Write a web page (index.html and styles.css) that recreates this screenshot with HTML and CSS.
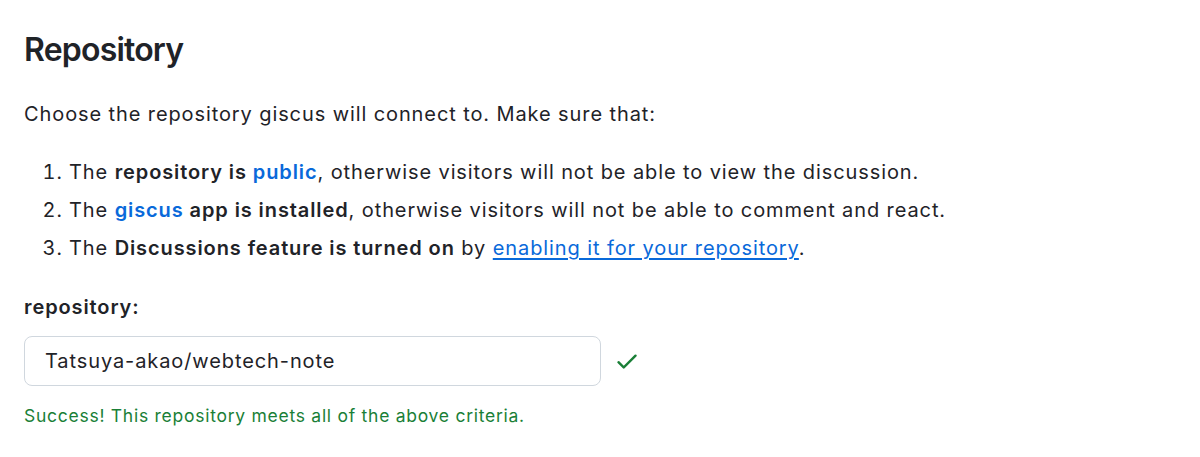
FILE: index.html
```html
<!DOCTYPE html>
<html lang="en">
<head>
<meta charset="utf-8">
<title>Repository</title>
<link rel="stylesheet" href="styles.css">
</head>
<body>
<main class="section">
  <h2 class="title">Repository</h2>
  <p class="intro">Choose the repository giscus will connect to. Make sure that:</p>
  <ol class="criteria">
    <li>The <strong>repository is <a class="link-bold" href="#">public</a></strong>, otherwise visitors will not be able to view the discussion.</li>
    <li>The <strong><a class="link-bold" href="#">giscus</a> app is installed</strong>, otherwise visitors will not be able to comment and react.</li>
    <li>The <strong>Discussions feature is turned on</strong> by <a class="link-under" href="#">enabling it for your repository</a>.</li>
  </ol>
  <div class="field">
    <label class="field-label" for="repo">repository:</label>
    <div class="field-row">
      <input id="repo" class="field-input" type="text" value="Tatsuya-akao/webtech-note">
      <svg class="check" viewBox="0 0 16 16" width="26" height="26" aria-hidden="true"><path fill="currentColor" d="M13.78 4.22a.75.75 0 0 1 0 1.06l-7.25 7.25a.75.75 0 0 1-1.06 0L2.22 9.28a.751.751 0 0 1 .018-1.042.751.751 0 0 1 1.042-.018L6 10.94l6.72-6.72a.75.75 0 0 1 1.06 0Z"/></svg>
    </div>
    <p class="success">Success! This repository meets all of the above criteria.</p>
  </div>
</main>
</body>
</html>
```

FILE: styles.css
```css
html, body {
  margin: 0;
  padding: 0;
  background: #ffffff;
}
body {
  font-family: Inter, "Liberation Sans", Arial, sans-serif;
  color: #1f2328;
  font-size: 20px;
  line-height: 30px;
  letter-spacing: 0.045em;
}
.section {
  padding: 30px 24px 0 24px;
}
.title {
  margin: 0;
  font-size: 32px;
  line-height: 40px;
  font-weight: 600;
  letter-spacing: -0.025em;
}
.intro {
  margin: 29px 0 0 0;
}
.criteria {
  margin: 28px 0 0 0;
  padding-left: 45px;
  display: flex;
  flex-direction: column;
  gap: 8px;
}
.criteria strong {
  font-weight: 600;
}
.link-bold {
  color: #0969da;
  text-decoration: none;
  font-weight: 600;
}
.link-under {
  color: #0969da;
  text-decoration: underline;
  text-underline-offset: 3px;
}
.field {
  margin-top: 29px;
}
.field-label {
  display: block;
  font-weight: 600;
}
.field-row {
  margin-top: 14px;
  display: flex;
  align-items: center;
  gap: 13px;
}
.field-input {
  box-sizing: border-box;
  width: 577px;
  height: 50px;
  padding: 0 20px;
  border: 1px solid #d0d7de;
  border-radius: 8px;
  font-family: inherit;
  font-size: 20px;
  letter-spacing: 0.045em;
  color: #1f2328;
  background: #ffffff;
  outline: none;
}
.check {
  color: #1a7f37;
  display: block;
}
.success {
  margin: 17px 0 0 0;
  color: #1a7f37;
  font-size: 17.5px;
  line-height: 26px;
  letter-spacing: 0.042em;
}
```
